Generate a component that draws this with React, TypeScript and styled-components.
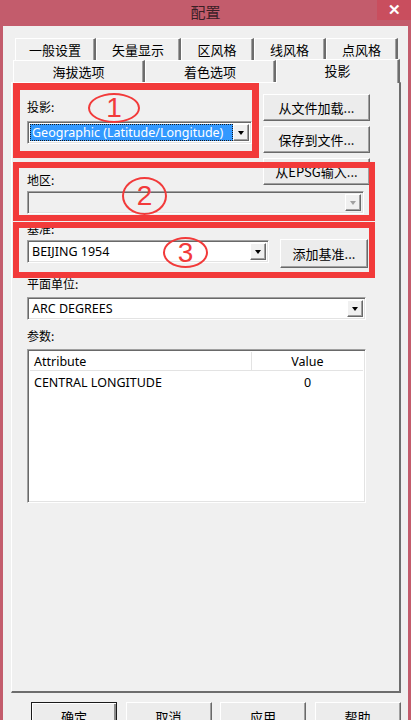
import React from 'react';
import styled, { createGlobalStyle } from 'styled-components';

const Global = createGlobalStyle`
  html, body { margin: 0; padding: 0; background: #c25b6b; }
  body { font-family: "Noto Sans", "Noto Sans CJK SC", sans-serif; }
  * { box-sizing: border-box; }
`;

const CJK = `"Noto Sans CJK SC", "Noto Sans", sans-serif`;
const LAT = `"Noto Sans", "Noto Sans CJK SC", sans-serif`;
const RED = '#f23a3a';

const Frame = styled.div`
  position: relative;
  width: 411px;
  height: 720px;
  overflow: hidden;
  background: #c35c6c;
  display: flex;
  flex-direction: column;
  padding: 0 3px;
`;

const TitleBar = styled.div`
  height: 26px;
  flex: none;
  display: grid;
  grid-template-columns: 1fr auto 1fr;
  align-items: start;
`;

const Title = styled.div`
  grid-column: 2;
  margin-top: 2px;
  font-family: ${CJK};
  font-size: 15px;
  line-height: 20px;
  color: #3a2026;
`;

const Close = styled.div`
  grid-column: 3;
  justify-self: end;
  width: 34px;
  height: 20px;
  margin-right: -3px;
  background: #c94e5e;
  color: #fff;
  font-family: ${LAT};
  font-size: 15px;
  font-weight: 700;
  line-height: 19px;
  text-align: center;
`;

const Body = styled.div`
  flex: 1;
  background: #f0f0f0;
  display: flex;
  flex-direction: column;
  padding: 11px 7px 0 8px;
`;

const TabRow = styled.div<{ $pl: number }>`
  display: flex;
  padding-left: ${p => p.$pl}px;
  height: ${p => (p.$pl === 4 ? 23 : 22)}px;
  align-items: flex-end;
`;

const Tab = styled.div<{ $w: number; $active?: boolean }>`
  width: ${p => p.$w}px;
  height: ${p => (p.$active ? 24 : 22)}px;
  display: flex;
  align-items: ${p => (p.$active ? 'flex-start' : 'center')};
  padding-top: ${p => (p.$active ? 1 : 0)}px;
  justify-content: center;
  font-family: ${CJK};
  font-size: 13px;
  color: #000;
  background: #f0f0f0;
  border-top: 1px solid #fff;
  border-left: 1px solid #fff;
  border-right: 2px solid #6d6d6d;
  box-shadow: inset -1px 0 0 #a0a0a0;
  position: relative;
  z-index: ${p => (p.$active ? 2 : 0)};
  margin-bottom: ${p => (p.$active ? -1 : 0)}px;
`;

const Panel = styled.div`
  height: 611px;
  flex: none;
  background: #f0f0f0;
  border-top: 1px solid #fff;
  border-left: 1px solid #fff;
  border-right: 2px solid #6d6d6d;
  border-bottom: 2px solid #6d6d6d;
  padding: 11px 0 0 15px;
  display: flex;
  flex-direction: column;
`;

const TopSection = styled.div`
  display: flex;
  gap: 11px;
`;

const LeftCol = styled.div`
  display: flex;
  flex-direction: column;
  padding-top: 6px;
`;

const RightCol = styled.div`
  display: flex;
  flex-direction: column;
  gap: 5px;
`;

const Label = styled.div<{ $mt?: number }>`
  font-family: ${CJK};
  font-size: 12px;
  line-height: 14px;
  height: 14px;
  color: #000;
  margin-top: ${p => p.$mt ?? 0}px;
`;

const Combo = styled.div<{ $w: number; $mt?: number; $disabled?: boolean }>`
  width: ${p => p.$w}px;
  height: 23px;
  margin-top: ${p => p.$mt ?? 0}px;
  display: flex;
  align-items: stretch;
  background: ${p => (p.$disabled ? '#f0f0f0' : '#fff')};
  border-top: 1px solid #a0a0a0;
  border-left: 1px solid #a0a0a0;
  border-right: 1px solid #fff;
  border-bottom: 1px solid #fff;
  box-shadow: inset 1px 1px 0 #696969, inset -1px -1px 0 #e3e3e3;
  padding: 2px;
`;

const ComboValue = styled.div<{ $selected?: boolean }>`
  flex: 1;
  display: flex;
  align-items: center;
  padding-left: 2px;
  font-family: ${LAT};
  font-size: 12.5px;
  color: ${p => (p.$selected ? '#fff' : '#000')};
  background: ${p => (p.$selected ? '#3399ff' : 'transparent')};
  outline: ${p => (p.$selected ? '1px dotted #1a1a1a' : 'none')};
  outline-offset: -1px;
  white-space: nowrap;
  overflow: hidden;
`;

const ArrowBtn = styled.div<{ $disabled?: boolean }>`
  width: 16px;
  flex: none;
  display: flex;
  align-items: center;
  justify-content: center;
  background: #f0f0f0;
  border-top: 1px solid #fff;
  border-left: 1px solid #fff;
  border-right: 1px solid #696969;
  border-bottom: 1px solid #696969;
  box-shadow: inset -1px -1px 0 #a0a0a0;
  &::after {
    content: '';
    border-left: 3.5px solid transparent;
    border-right: 3.5px solid transparent;
    border-top: 4px solid ${p => (p.$disabled ? '#a0a0a0' : '#000')};
    margin-top: 1px;
  }
`;

const Btn = styled.div<{ $w: number; $h?: number; $default?: boolean }>`
  width: ${p => p.$w}px;
  height: ${p => p.$h ?? 27}px;
  flex: none;
  display: flex;
  align-items: center;
  justify-content: center;
  font-family: ${CJK};
  font-size: 13px;
  color: #000;
  background: #ececec;
  border-top: 1px solid ${p => (p.$default ? '#1a1a1a' : '#fff')};
  border-left: 1px solid ${p => (p.$default ? '#1a1a1a' : '#fff')};
  border-right: 1px solid ${p => (p.$default ? '#1a1a1a' : '#696969')};
  border-bottom: 1px solid ${p => (p.$default ? '#1a1a1a' : '#696969')};
  box-shadow: ${p =>
    p.$default
      ? 'inset 1px 1px 0 #fff, inset -2px -2px 0 #8a8a8a'
      : 'inset -1px -1px 0 #a0a0a0'};
`;

const Row = styled.div<{ $mt: number }>`
  display: flex;
  align-items: flex-start;
  gap: 11px;
  margin-top: ${p => p.$mt}px;
`;

const List = styled.div`
  width: 339px;
  height: 154px;
  margin-top: 6px;
  background: #fff;
  border-top: 1px solid #a0a0a0;
  border-left: 1px solid #a0a0a0;
  border-right: 1px solid #fff;
  border-bottom: 1px solid #fff;
  box-shadow: inset 1px 1px 0 #696969, inset -1px -1px 0 #e3e3e3;
  padding: 2px;
  display: flex;
  flex-direction: column;
`;

const GridRow = styled.div<{ $header?: boolean }>`
  display: grid;
  grid-template-columns: 222px 1fr;
  height: ${p => (p.$header ? 19 : 22)}px;
  align-items: center;
  border-bottom: ${p => (p.$header ? '1px solid #e3e3e3' : 'none')};
  font-family: ${LAT};
  font-size: 12.5px;
  color: #000;
`;

const Cell = styled.div<{ $center?: boolean; $sep?: boolean }>`
  height: 100%;
  display: flex;
  align-items: center;
  justify-content: ${p => (p.$center ? 'center' : 'flex-start')};
  padding-left: ${p => (p.$center ? 0 : 4)}px;
  border-right: ${p => (p.$sep ? '1px solid #e3e3e3' : 'none')};
`;

const Footer = styled.div`
  display: flex;
  gap: 8.5px;
  padding: 9px 0 0 20px;
`;

const RedBox = styled.div<{ $bw: number }>`
  position: absolute;
  border: ${p => p.$bw}px solid ${RED};
  pointer-events: none;
`;

const Mark = styled.div`
  position: absolute;
  border: 2px solid ${RED};
  border-radius: 50%;
  display: flex;
  align-items: center;
  justify-content: center;
  color: ${RED};
  font-family: "Liberation Sans", sans-serif;
  font-size: 28px;
  line-height: 1;
  pointer-events: none;
`;

export default function App() {
  return (
    <>
      <Global />
      <Frame>
        <TitleBar>
          <Title>配置</Title>
          <Close>✕</Close>
        </TitleBar>
        <Body>
          <TabRow $pl={4}>
            <Tab $w={81}>一般设置</Tab>
            <Tab $w={85}>矢量显示</Tab>
            <Tab $w={73}>区风格</Tab>
            <Tab $w={72}>线风格</Tab>
            <Tab $w={72}>点风格</Tab>
          </TabRow>
          <TabRow $pl={2}>
            <Tab $w={132}>海拔选项</Tab>
            <Tab $w={131}>着色选项</Tab>
            <Tab $w={124} $active>投影</Tab>
          </TabRow>
          <Panel>
            <TopSection>
              <LeftCol>
                <Label>投影:</Label>
                <Combo $w={225} $mt={7}>
                  <ComboValue $selected>Geographic (Latitude/Longitude)</ComboValue>
                  <ArrowBtn />
                </Combo>
                <Label $mt={29}>地区:</Label>
              </LeftCol>
              <RightCol>
                <Btn $w={107}>从文件加载...</Btn>
                <Btn $w={107}>保存到文件...</Btn>
                <Btn $w={107}>从EPSG输入...</Btn>
              </RightCol>
            </TopSection>
            <Combo $w={337} $mt={4} $disabled>
              <ComboValue />
              <ArrowBtn $disabled />
            </Combo>
            <Label $mt={8}>基准:</Label>
            <Row $mt={3}>
              <Combo $w={242} $mt={1}>
                <ComboValue>BEIJING 1954</ComboValue>
                <ArrowBtn />
              </Combo>
              <Btn $w={88} $h={29}>添加基准...</Btn>
            </Row>
            <Label $mt={9}>平面单位:</Label>
            <Combo $w={339} $mt={6}>
              <ComboValue>ARC DEGREES</ComboValue>
              <ArrowBtn />
            </Combo>
            <Label $mt={9}>参数:</Label>
            <List>
              <GridRow $header>
                <Cell $sep>Attribute</Cell>
                <Cell $center>Value</Cell>
              </GridRow>
              <GridRow>
                <Cell>CENTRAL LONGITUDE</Cell>
                <Cell $center>0</Cell>
              </GridRow>
            </List>
          </Panel>
          <Footer>
            <Btn $w={86} $h={28} $default>确定</Btn>
            <Btn $w={86} $h={28}>取消</Btn>
            <Btn $w={86} $h={28}>应用</Btn>
            <Btn $w={86} $h={28}>帮助</Btn>
          </Footer>
        </Body>
        <RedBox $bw={7} style={{ left: 13, top: 83, width: 246, height: 75 }} />
        <RedBox $bw={6} style={{ left: 13, top: 162, width: 362, height: 59 }} />
        <RedBox $bw={6} style={{ left: 13, top: 222, width: 362, height: 56 }} />
        <Mark style={{ left: 88, top: 93, width: 52, height: 30 }}>1</Mark>
        <Mark style={{ left: 122, top: 177, width: 45, height: 38 }}>2</Mark>
        <Mark style={{ left: 163, top: 237, width: 45, height: 31 }}>3</Mark>
      </Frame>
    </>
  );
}
